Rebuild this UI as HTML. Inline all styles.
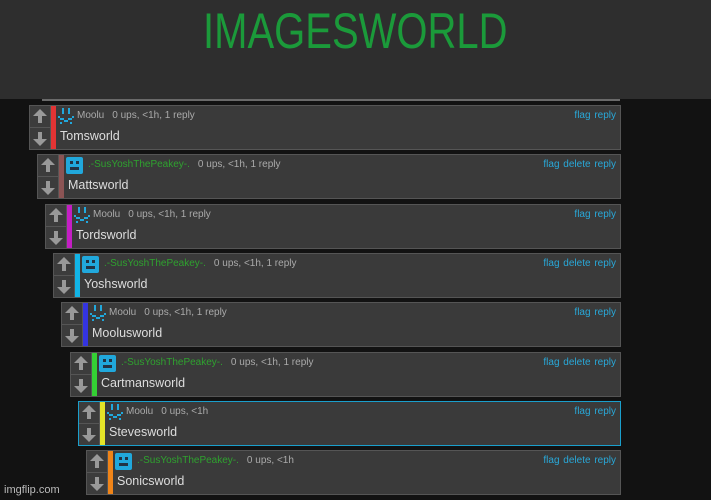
<!DOCTYPE html><html><head><style>
body{margin:0;width:711px;height:500px;background:#121212;overflow:hidden;font-family:"Liberation Sans",sans-serif;position:relative}
.hdr{position:absolute;left:0;top:0;width:711px;height:99px;background:#2e2e2e}
.title{position:absolute;left:0;top:6px;width:711px;text-align:center;color:#1b9a3a;font-size:50px;line-height:50px}
.title span{display:inline-block;transform:scaleX(0.8)}
.line{position:absolute;left:42px;top:99px;width:578px;height:2px;background:#6a6a6a}
.row{position:absolute;height:43px;background:#3a3a3a;border:1px solid #555;box-sizing:content-box}
.vote{position:absolute;left:0;top:0;width:20px;height:43px;background:#3c3c3c;border-right:1px solid #555}
.vote div{height:21px;border-bottom:1px solid #555;position:relative}
.vote div:last-child{border:none}
.bar{position:absolute;left:21px;top:0;width:5px;height:43px}
.ico{position:absolute;left:28px;top:2px}
.meta{position:absolute;top:4px;font-size:10px;color:#aaa;white-space:nowrap}
.name{font-size:10px;margin-right:8px}
.txt{position:absolute;left:30px;top:23px;font-size:12.5px;color:#ddd}
.act{position:absolute;right:4px;top:4px;font-size:10px;color:#29a8d8;word-spacing:1px}
.tri{position:absolute;left:3px;width:0;height:0;border-left:7px solid transparent;border-right:7px solid transparent}
.up .tri{top:3px;border-bottom:7px solid #999}
.up .stem{position:absolute;left:8px;top:10px;width:4px;height:7px;background:#999}
.dn .tri{top:11px;border-top:7px solid #999}
.dn .stem{position:absolute;left:8px;top:4px;width:4px;height:7px;background:#999}
</style></head><body>
<div class="hdr"></div>
<div class="title"><span>IMAGESWORLD</span></div>
<div class="line"></div>

<div class="row" style="left:29px;top:105px;width:590px">
<div class="vote"><div class="up"><i class="tri"></i><i class="stem"></i></div><div class="dn"><i class="stem"></i><i class="tri"></i></div></div>
<div class="bar" style="background:#e23434"></div>
<svg class="ico" width="16" height="16" viewBox="0 0 8 8" shape-rendering="crispEdges"><g fill="#21a8dc"><rect x="2" y="0" width="1" height="3"/><rect x="5" y="0" width="1" height="3"/><rect x="0" y="4" width="1" height="1"/><rect x="7" y="4" width="1" height="1"/><rect x="1" y="5" width="2" height="1"/><rect x="5" y="5" width="2" height="1"/><rect x="3" y="6" width="2" height="1"/><rect x="1" y="7" width="1" height="1"/><rect x="6" y="7" width="1" height="1"/></g></svg>
<div class="meta" style="left:47px"><span class="name" style="color:#aaa">Moolu</span>0 ups, &lt;1h, 1 reply</div>
<div class="act">flag reply</div><div class="txt">Tomsworld</div></div>

<div class="row" style="left:37px;top:154px;width:582px">
<div class="vote"><div class="up"><i class="tri"></i><i class="stem"></i></div><div class="dn"><i class="stem"></i><i class="tri"></i></div></div>
<div class="bar" style="background:#8c5454"></div>
<svg class="ico" width="17" height="17" viewBox="0 0 17 17"><rect width="17" height="17" rx="2" fill="#21a8dc"/><rect x="4" y="4" width="3" height="3" fill="#234"/><rect x="10" y="4" width="3" height="3" fill="#234"/><rect x="4" y="10" width="9" height="3" fill="#234"/></svg>
<div class="meta" style="left:50px"><span class="name" style="color:#2fa22f">.-SusYoshThePeakey-.</span>0 ups, &lt;1h, 1 reply</div>
<div class="act">flag delete reply</div><div class="txt">Mattsworld</div></div>

<div class="row" style="left:45px;top:204px;width:574px">
<div class="vote"><div class="up"><i class="tri"></i><i class="stem"></i></div><div class="dn"><i class="stem"></i><i class="tri"></i></div></div>
<div class="bar" style="background:#c41ec4"></div>
<svg class="ico" width="16" height="16" viewBox="0 0 8 8" shape-rendering="crispEdges"><g fill="#21a8dc"><rect x="2" y="0" width="1" height="3"/><rect x="5" y="0" width="1" height="3"/><rect x="0" y="4" width="1" height="1"/><rect x="7" y="4" width="1" height="1"/><rect x="1" y="5" width="2" height="1"/><rect x="5" y="5" width="2" height="1"/><rect x="3" y="6" width="2" height="1"/><rect x="1" y="7" width="1" height="1"/><rect x="6" y="7" width="1" height="1"/></g></svg>
<div class="meta" style="left:47px"><span class="name">Moolu</span>0 ups, &lt;1h, 1 reply</div>
<div class="act">flag reply</div><div class="txt">Tordsworld</div></div>

<div class="row" style="left:53px;top:253px;width:566px">
<div class="vote"><div class="up"><i class="tri"></i><i class="stem"></i></div><div class="dn"><i class="stem"></i><i class="tri"></i></div></div>
<div class="bar" style="background:#12b4e6"></div>
<svg class="ico" width="17" height="17" viewBox="0 0 17 17"><rect width="17" height="17" rx="2" fill="#21a8dc"/><rect x="4" y="4" width="3" height="3" fill="#234"/><rect x="10" y="4" width="3" height="3" fill="#234"/><rect x="4" y="10" width="9" height="3" fill="#234"/></svg>
<div class="meta" style="left:50px"><span class="name" style="color:#2fa22f">.-SusYoshThePeakey-.</span>0 ups, &lt;1h, 1 reply</div>
<div class="act">flag delete reply</div><div class="txt">Yoshsworld</div></div>

<div class="row" style="left:61px;top:302px;width:558px">
<div class="vote"><div class="up"><i class="tri"></i><i class="stem"></i></div><div class="dn"><i class="stem"></i><i class="tri"></i></div></div>
<div class="bar" style="background:#3434e0"></div>
<svg class="ico" width="16" height="16" viewBox="0 0 8 8" shape-rendering="crispEdges"><g fill="#21a8dc"><rect x="2" y="0" width="1" height="3"/><rect x="5" y="0" width="1" height="3"/><rect x="0" y="4" width="1" height="1"/><rect x="7" y="4" width="1" height="1"/><rect x="1" y="5" width="2" height="1"/><rect x="5" y="5" width="2" height="1"/><rect x="3" y="6" width="2" height="1"/><rect x="1" y="7" width="1" height="1"/><rect x="6" y="7" width="1" height="1"/></g></svg>
<div class="meta" style="left:47px"><span class="name">Moolu</span>0 ups, &lt;1h, 1 reply</div>
<div class="act">flag reply</div><div class="txt">Moolusworld</div></div>

<div class="row" style="left:70px;top:352px;width:549px">
<div class="vote"><div class="up"><i class="tri"></i><i class="stem"></i></div><div class="dn"><i class="stem"></i><i class="tri"></i></div></div>
<div class="bar" style="background:#34d034"></div>
<svg class="ico" width="17" height="17" viewBox="0 0 17 17"><rect width="17" height="17" rx="2" fill="#21a8dc"/><rect x="4" y="4" width="3" height="3" fill="#234"/><rect x="10" y="4" width="3" height="3" fill="#234"/><rect x="4" y="10" width="9" height="3" fill="#234"/></svg>
<div class="meta" style="left:50px"><span class="name" style="color:#2fa22f">.-SusYoshThePeakey-.</span>0 ups, &lt;1h, 1 reply</div>
<div class="act">flag delete reply</div><div class="txt">Cartmansworld</div></div>

<div class="row" style="left:78px;top:401px;width:541px;border-color:#1a9fcc">
<div class="vote"><div class="up"><i class="tri"></i><i class="stem"></i></div><div class="dn"><i class="stem"></i><i class="tri"></i></div></div>
<div class="bar" style="background:#e4e428"></div>
<svg class="ico" width="16" height="16" viewBox="0 0 8 8" shape-rendering="crispEdges"><g fill="#21a8dc"><rect x="2" y="0" width="1" height="3"/><rect x="5" y="0" width="1" height="3"/><rect x="0" y="4" width="1" height="1"/><rect x="7" y="4" width="1" height="1"/><rect x="1" y="5" width="2" height="1"/><rect x="5" y="5" width="2" height="1"/><rect x="3" y="6" width="2" height="1"/><rect x="1" y="7" width="1" height="1"/><rect x="6" y="7" width="1" height="1"/></g></svg>
<div class="meta" style="left:47px"><span class="name">Moolu</span>0 ups, &lt;1h</div>
<div class="act">flag reply</div><div class="txt">Stevesworld</div></div>

<div class="row" style="left:86px;top:450px;width:533px">
<div class="vote"><div class="up"><i class="tri"></i><i class="stem"></i></div><div class="dn"><i class="stem"></i><i class="tri"></i></div></div>
<div class="bar" style="background:#f08418"></div>
<svg class="ico" width="17" height="17" viewBox="0 0 17 17"><rect width="17" height="17" rx="2" fill="#21a8dc"/><rect x="4" y="4" width="3" height="3" fill="#234"/><rect x="10" y="4" width="3" height="3" fill="#234"/><rect x="4" y="10" width="9" height="3" fill="#234"/></svg>
<div class="meta" style="left:50px"><span class="name" style="color:#2fa22f">.-SusYoshThePeakey-.</span>0 ups, &lt;1h</div>
<div class="act">flag delete reply</div><div class="txt">Sonicsworld</div></div>

<div style="position:absolute;left:4px;top:484px;font-size:11px;color:#bbb">imgflip.com</div>
</body></html>
